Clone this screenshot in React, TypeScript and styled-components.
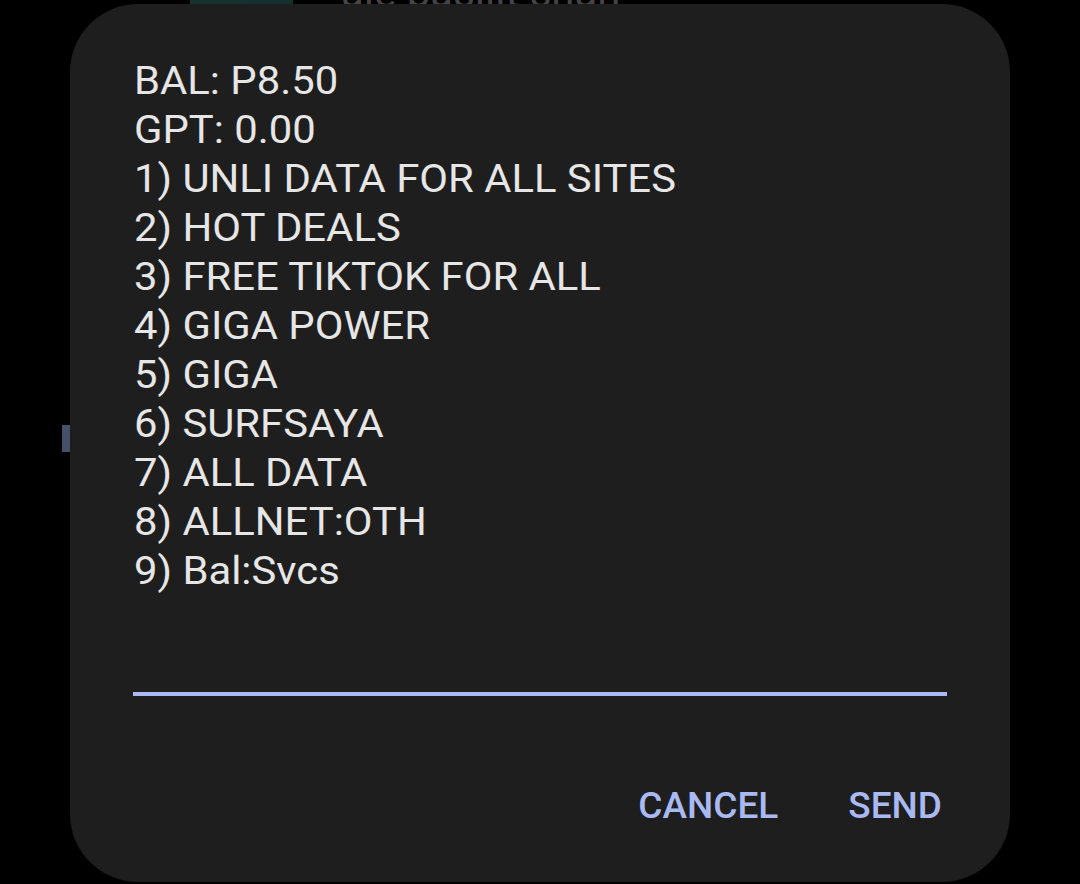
import React from "react";
import styled, { createGlobalStyle } from "styled-components";

const Global = createGlobalStyle`
  html, body { margin: 0; padding: 0; background: #000; }
  body { width: 1080px; height: 884px; overflow: hidden; font-family: Roboto, "Noto Sans", sans-serif; }
`;

const Page = styled.div`
  position: relative;
  width: 1080px;
  height: 884px;
  background: #000;
  overflow: hidden;
`;

const BehindHeader = styled.div`
  display: flex;
  align-items: center;
  gap: 48px;
  padding-left: 190px;
  height: 40px;
  margin-top: -27px;
  opacity: 0.45;
`;

const BehindIcon = styled.div`
  width: 103px;
  height: 40px;
  background: #2f6e68;
  border-radius: 4px;
`;

const BehindTitle = styled.div`
  color: #9a9a9a;
  font-size: 42px;
  line-height: 40px;
  font-family: Roboto, sans-serif;
`;

const BehindSide = styled.div`
  margin: 412px 0 0 62px;
  width: 8px;
  height: 27px;
  background: #45506a;
`;

const Dialog = styled.div`
  position: absolute;
  left: 70px;
  top: 4px;
  width: 940px;
  height: 878px;
  background: #1e1e1e;
  border-radius: 68px;
  display: flex;
  flex-direction: column;
  box-sizing: border-box;
  padding: 53px 63px 0 64px;
`;

const Message = styled.div`
  color: #e6e6e6;
  font-family: Roboto, sans-serif;
  font-size: 38px;
  line-height: 49px;
  white-space: pre-line;
  transform: scaleX(1.1);
  transform-origin: left top;
`;

const Input = styled.div`
  margin-top: 96px;
  height: 4px;
  background: #a9b9f2;
  margin-left: -1px;
`;

const Actions = styled.div`
  display: flex;
  justify-content: flex-end;
  gap: 70px;
  margin-top: 88px;
  padding-right: 5px;
`;

const ActionButton = styled.button`
  background: none;
  border: none;
  padding: 0;
  color: #a9b9f2;
  font-family: Roboto, sans-serif;
  font-weight: 500;
  font-size: 37px;
  line-height: 44px;
  letter-spacing: 0;
  cursor: pointer;
`;

const lines = [
  "BAL: P8.50",
  "GPT: 0.00",
  "1) UNLI DATA FOR ALL SITES",
  "2) HOT DEALS",
  "3) FREE TIKTOK FOR ALL",
  "4) GIGA POWER",
  "5) GIGA",
  "6) SURFSAYA",
  "7) ALL DATA",
  "8) ALLNET:OTH",
  "9) Bal:Svcs",
];

export default function App() {
  return (
    <Page>
      <Global />
      <BehindHeader>
        <BehindIcon />
        <BehindTitle>ale basilit shah</BehindTitle>
      </BehindHeader>
      <BehindSide />
      <Dialog>
        <Message>{lines.join("\n")}</Message>
        <Input />
        <Actions>
          <ActionButton>CANCEL</ActionButton>
          <ActionButton>SEND</ActionButton>
        </Actions>
      </Dialog>
    </Page>
  );
}
